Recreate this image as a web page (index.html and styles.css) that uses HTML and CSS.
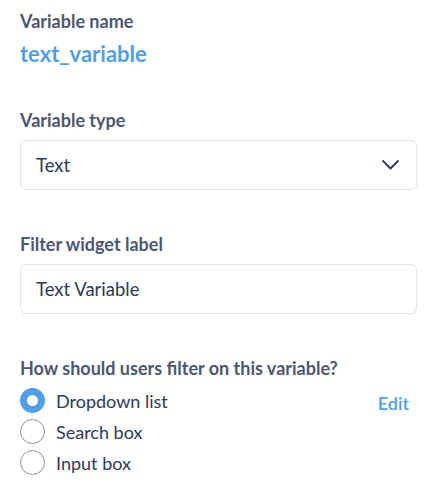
FILE: index.html
```html
<!DOCTYPE html>
<html lang="en">
<head>
  <meta charset="UTF-8">
  <title>Variable settings</title>
  <link rel="stylesheet" href="styles.css">
</head>
<body>
  <div class="panel">
    <section class="field">
      <h3 class="label">Variable name</h3>
      <div class="var-name">text_variable</div>
    </section>

    <section class="field">
      <h3 class="label">Variable type</h3>
      <div class="box select">
        <span>Text</span>
        <svg class="chevron" width="17" height="10" viewBox="0 0 17 10">
          <path d="M1 1 L8.5 8.5 L16 1" fill="none" stroke="#2e3a59" stroke-width="1.8" stroke-linecap="round" stroke-linejoin="round"/>
        </svg>
      </div>
    </section>

    <section class="field">
      <h3 class="label">Filter widget label</h3>
      <div class="box">Text Variable</div>
    </section>

    <section class="field last">
      <h3 class="label">How should users filter on this variable?</h3>
      <div class="options">
        <div class="option">
          <span class="radio checked"></span>
          <span class="option-text">Dropdown list</span>
          <a class="edit" href="#">Edit</a>
        </div>
        <div class="option">
          <span class="radio"></span>
          <span class="option-text">Search box</span>
        </div>
        <div class="option">
          <span class="radio"></span>
          <span class="option-text">Input box</span>
        </div>
      </div>
    </section>
  </div>
</body>
</html>
```

FILE: styles.css
```css
body {
  margin: 0;
  font-family: Lato, 'Noto Sans', sans-serif;
  background-color: #fff;
  color: #2e3a59;
}

.panel {
  padding: 10px 18px 0 20px;
}

.field {
  margin-bottom: 43px;
}

.label {
  margin: 0 0 9px;
  font-size: 18px;
  font-weight: 700;
  color: #4c5773;
  line-height: 22px;
}

.var-name {
  font-size: 22px;
  font-weight: 700;
  color: #509ee3;
  line-height: 25px;
}

.box {
  height: 50px;
  box-sizing: border-box;
  border: 1px solid #e3e6eb;
  border-radius: 6px;
  padding: 0 15px;
  display: flex;
  align-items: center;
  font-size: 18.5px;
  color: #2e3a59;
}

.select {
  justify-content: space-between;
}

.chevron {
  margin-right: 2px;
}

.field.last .label {
  margin-bottom: 9px;
}

.options {
  display: flex;
  flex-direction: column;
  gap: 6px;
}

.option {
  display: flex;
  align-items: center;
  height: 25px;
}

.radio {
  width: 25px;
  height: 25px;
  box-sizing: border-box;
  border: 1.5px solid #8d94a6;
  border-radius: 50%;
  margin-right: 11px;
}

.radio.checked {
  border: 7px solid #509ee3;
}

.option-text {
  font-size: 18px;
  color: #2e3a59;
}

.edit {
  margin-left: auto;
  margin-right: 8px;
  margin-top: 5px;
  font-size: 18px;
  font-weight: 600;
  color: #509ee3;
  text-decoration: none;
}
```
